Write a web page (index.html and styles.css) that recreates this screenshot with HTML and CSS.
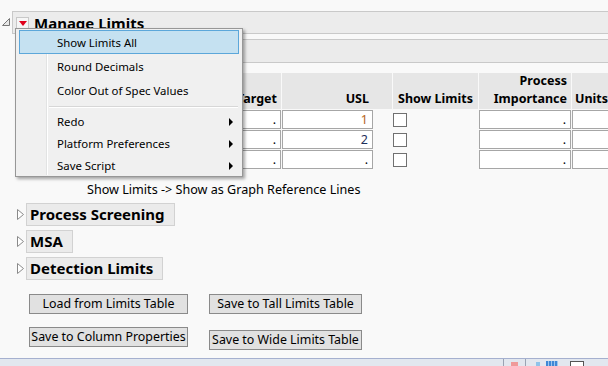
FILE: index.html
```html
<!DOCTYPE html>
<html>
<head>
<meta charset="utf-8">
<link rel="stylesheet" href="styles.css">
</head>
<body>
<div class="page">
  <div class="content">
    <div class="main-row">
      <span class="disc-open"><svg width="10" height="10" viewBox="0 0 10 10"><path d="M1.5 8.5 L8.5 1.5 L8.5 8.5 Z" fill="#e8e8e8" stroke="#777" stroke-width="1"/></svg></span>
      <div class="main-head">
        <span class="redbtn"><svg width="8" height="5" viewBox="0 0 8 5"><path d="M0 0 L8 0 L4 5 Z" fill="#e0001b"/></svg></span>
        <span class="title">Manage Limits</span>
      </div>
    </div>
    <div class="subband"></div>
    <div class="grid">
      <div class="hd"></div>
      <div class="hd"></div>
      <div class="hd">Target</div>
      <div class="hd usl">USL</div>
      <div class="hd center">Show Limits</div>
      <div class="hd">Process<br>Importance</div>
      <div class="hd left">Units</div>

      <div class="cell name"></div>
      <div class="cell"></div>
      <div class="cell">.</div>
      <div class="cell usl-cell"><span class="v-orange">1</span></div>
      <div class="chk"><span class="box"></span></div>
      <div class="cell">.</div>
      <div class="cell"></div>

      <div class="cell name"></div>
      <div class="cell"></div>
      <div class="cell">.</div>
      <div class="cell usl-cell"><span class="v-blue">2</span></div>
      <div class="chk"><span class="box"></span></div>
      <div class="cell">.</div>
      <div class="cell"></div>

      <div class="cell name"></div>
      <div class="cell"></div>
      <div class="cell">.</div>
      <div class="cell usl-cell">.</div>
      <div class="chk"><span class="box"></span></div>
      <div class="cell">.</div>
      <div class="cell"></div>
    </div>
    <div class="note">Show Limits -&gt; Show as Graph Reference Lines</div>
    <div class="sections">
      <div class="section">
        <span class="disc-closed"><svg width="7" height="11" viewBox="0 0 7 11"><path d="M0.5 0.5 L6.5 5.5 L0.5 10.5 Z" fill="#fff" stroke="#8a8a8a" stroke-width="1"/></svg></span>
        <div class="sec-head">Process Screening</div>
      </div>
      <div class="section">
        <span class="disc-closed"><svg width="7" height="11" viewBox="0 0 7 11"><path d="M0.5 0.5 L6.5 5.5 L0.5 10.5 Z" fill="#fff" stroke="#8a8a8a" stroke-width="1"/></svg></span>
        <div class="sec-head">MSA</div>
      </div>
      <div class="section">
        <span class="disc-closed"><svg width="7" height="11" viewBox="0 0 7 11"><path d="M0.5 0.5 L6.5 5.5 L0.5 10.5 Z" fill="#fff" stroke="#8a8a8a" stroke-width="1"/></svg></span>
        <div class="sec-head">Detection Limits</div>
      </div>
    </div>
    <div class="buttons">
      <div class="btn-col col-left">
        <div class="btn">Load from Limits Table</div>
        <div class="btn">Save to Column Properties</div>
      </div>
      <div class="btn-col col-right">
        <div class="btn">Save to Tall Limits Table</div>
        <div class="btn">Save to Wide Limits Table</div>
      </div>
    </div>
  </div>
  <div class="statusbar">
    <span class="sb-spacer"></span>
    <span class="sb-sep"></span>
    <span class="sb-red"></span>
    <span class="sb-sep"></span>
    <span class="sb-blue-small"></span>
    <span class="sb-blue-grid"></span>
    <span class="sb-box"></span>
  </div>

  <div class="menu">
    <div class="gutter"></div>
    <div class="mi hl">Show Limits All</div>
    <div class="mi">Round Decimals</div>
    <div class="mi">Color Out of Spec Values</div>
    <div class="msep"></div>
    <div class="mi sub">Redo<span class="arrow"></span></div>
    <div class="mi sub">Platform Preferences<span class="arrow"></span></div>
    <div class="mi sub">Save Script<span class="arrow"></span></div>
  </div>
</div>
</body>
</html>
```
FILE: styles.css
```css
html, body {
  margin: 0;
  padding: 0;
}
body {
  background: #f9f9f9;
  font-family: "Noto Sans", "Open Sans", sans-serif;
  font-size: 12px;
  color: #000;
  overflow: hidden;
}
.page {
  position: relative;
  width: 608px;
  height: 366px;
  display: flex;
  flex-direction: column;
  overflow: hidden;
}
.content {
  flex: 1;
  padding-top: 11px;
}
.main-row {
  display: flex;
  height: 23px;
}
.disc-open {
  width: 12px;
  display: flex;
  align-items: flex-start;
  padding-top: 6px;
  padding-left: 1px;
  box-sizing: border-box;
}
.main-head {
  flex: 1;
  display: flex;
  align-items: center;
  background: #ececec;
  border: 1px solid #c9c9c9;
  border-right: none;
  box-sizing: border-box;
  padding-left: 3px;
  white-space: nowrap;
}
.redbtn {
  width: 11px;
  height: 10px;
  border: 1px solid #c8c8c8;
  background: #f6f6f6;
  display: flex;
  align-items: center;
  justify-content: center;
  margin-top: 1px;
}
.title {
  font-weight: bold;
  font-size: 15px;
  margin-left: 5px;
  line-height: 20px;
  margin-top: 1px;
}
.subband {
  margin-left: 26px;
  margin-top: 5px;
  height: 24px;
  box-sizing: border-box;
  background: #ebebeb;
  border-top: 1px solid #c9c9c9;
  border-bottom: 1px solid #c9c9c9;
}
.grid {
  margin-top: 10px;
  margin-left: 40px;
  display: grid;
  grid-template-columns: 99px 60px 80px 110px 85px 92px 80px;
  grid-template-rows: 36px 19px 19px 19px;
  column-gap: 1px;
  row-gap: 1px;
  width: 620px;
  font-size: 12.5px;
}
.hd {
  background: #e6e6e6;
  font-weight: bold;
  line-height: 18px;
  text-align: right;
  padding: 0 4px 1px 4px;
  display: flex;
  flex-direction: column;
  justify-content: flex-end;
  white-space: nowrap;
}
.hd.usl { padding-right: 23px; }
.hd.center { text-align: center; }
.hd.left { text-align: left; padding-left: 3px; }
.cell {
  background: #fff;
  border: 1px solid #a6a6a6;
  box-sizing: border-box;
  text-align: right;
  padding-right: 4px;
  line-height: 17px;
  white-space: nowrap;
  overflow: hidden;
}
.cell.name { text-align: left; padding-left: 4px; }
.cell.usl-cell { width: 91px; }
.v-orange { color: #b5651d; }
.v-blue { color: #1f2f5a; }
.chk {
  display: flex;
  align-items: flex-start;
  padding-top: 3px;
}
.box {
  width: 14px;
  height: 14px;
  box-sizing: border-box;
  border: 1px solid #707070;
  background: #fff;
}
.note {
  margin-top: 13px;
  padding-left: 87px;
  line-height: 16px;
  font-size: 12.6px;
}
.sections {
  margin-top: 5px;
  margin-left: 15px;
  display: flex;
  flex-direction: column;
  gap: 4px;
  align-items: flex-start;
}
.section {
  display: flex;
  align-items: center;
  height: 23px;
}
.disc-closed {
  width: 11px;
  display: flex;
  padding-left: 2px;
  box-sizing: border-box;
}
.sec-head {
  height: 23px;
  box-sizing: border-box;
  background: #ebebeb;
  border: 1px solid #d2d2d2;
  font-weight: bold;
  font-size: 15px;
  line-height: 21px;
  padding: 0 9px 0 3px;
  white-space: nowrap;
}
.buttons {
  margin-top: 14px;
  margin-left: 29px;
  display: flex;
  gap: 21px;
  font-size: 12.4px;
}
.btn-col {
  display: flex;
  flex-direction: column;
}
.col-left { width: 159px; gap: 13px; }
.col-right { width: 153px; gap: 16px; }
.btn {
  height: 20px;
  box-sizing: border-box;
  background: #e1e1e1;
  border: 1px solid #8a8a8a;
  text-align: center;
  line-height: 18px;
  white-space: nowrap;
}
.statusbar {
  height: 8px;
  box-sizing: border-box;
  background: #e2e7ef;
  border-top: 1px solid #a5b0cf;
  display: flex;
  align-items: flex-start;
  padding-right: 24px;
}
.sb-spacer { flex: 1; }
.sb-sep { width: 1px; height: 8px; background: #9aa3b3; }
.sb-red { width: 7px; height: 4px; margin: 3px 7px 0 7px; background: #ef9a9a; }
.sb-blue-small { width: 4px; height: 4px; margin: 3px 6px 0 10px; background: #8fc3ea; }
.sb-blue-grid { width: 12px; height: 5px; margin-top: 2px; background: repeating-linear-gradient(90deg, #3f88d6 0 2px, #9cc6ee 2px 3px); }
.sb-box { width: 14px; height: 6px; margin: 2px 0 0 12px; border: 1px solid #555; border-bottom: none; box-sizing: border-box; background: #fff; }

.menu {
  position: absolute;
  left: 15px;
  top: 28px;
  width: 228px;
  box-sizing: border-box;
  background: #f0f0f0;
  border: 1px solid #979797;
  box-shadow: 2px 2px 3px rgba(0,0,0,0.35);
  padding: 1px 2px 0 2px;
  height: 149px;
  font-size: 11.4px;
}
.gutter {
  position: absolute;
  left: 30px;
  top: 1px;
  bottom: 1px;
  width: 1px;
  background: #e2e3e3;
  border-right: 1px solid #fff;
}
.mi {
  position: relative;
  height: 24px;
  line-height: 26px;
  padding-left: 38px;
  box-sizing: border-box;
  white-space: nowrap;
  margin: 0 1px;
}
.mi.sub { height: 22px; line-height: 24px; }
.mi.hl {
  background: #c5e1f1;
  border: 1px solid #5ca7da;
  line-height: 24px;
  padding-left: 37px;
}
.msep {
  height: 8px;
  margin-left: 31px;
  margin-right: 2px;
  position: relative;
}
.msep::after {
  content: "";
  position: absolute;
  left: 0;
  right: 0;
  top: 4px;
  height: 1px;
  background: #d7d7d7;
  border-bottom: 1px solid #fff;
}
.arrow {
  position: absolute;
  right: 6px;
  top: 8px;
  width: 0;
  height: 0;
  border-top: 4px solid transparent;
  border-bottom: 4px solid transparent;
  border-left: 4px solid #000;
}
```
